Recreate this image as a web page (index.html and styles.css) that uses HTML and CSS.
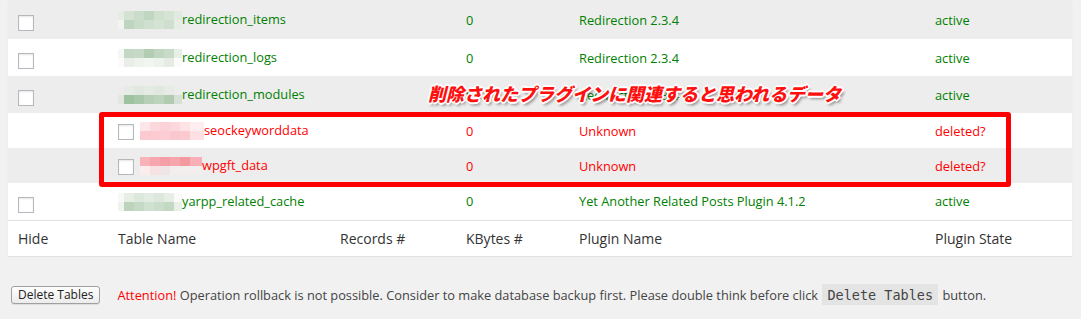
FILE: index.html
```html
<!DOCTYPE html>
<html lang="en">

<head>
    <meta charset="UTF-8">
    <title>Database Cleanup - Tables</title>
    <link rel="stylesheet" href="styles.css">
</head>

<body>
    <div class="wrap">
        <div class="table-box">
            <table class="tables">
                <tbody>
                    <tr class="alt r1">
                        <td class="hide-col"><input type="checkbox" class="chk"></td>
                        <td><span class="mosaic g-a"></span>redirection_items</td>
                        <td></td>
                        <td>0</td>
                        <td>Redirection 2.3.4</td>
                        <td>active</td>
                    </tr>
                    <tr class="r2">
                        <td class="hide-col"><input type="checkbox" class="chk"></td>
                        <td><span class="mosaic g-b"></span>redirection_logs</td>
                        <td></td>
                        <td>0</td>
                        <td>Redirection 2.3.4</td>
                        <td>active</td>
                    </tr>
                    <tr class="alt r3">
                        <td class="hide-col"><input type="checkbox" class="chk"></td>
                        <td><span class="mosaic g-c"></span>redirection_modules</td>
                        <td></td>
                        <td>0</td>
                        <td>Redirection 2.3.4</td>
                        <td>active</td>
                    </tr>
                    <tr class="deleted r4">
                        <td class="hide-col"></td>
                        <td><input type="checkbox" class="chk inline"><span class="mosaic r-a"></span>seockeyworddata</td>
                        <td></td>
                        <td>0</td>
                        <td>Unknown</td>
                        <td>deleted?</td>
                    </tr>
                    <tr class="alt deleted r5">
                        <td class="hide-col"></td>
                        <td><input type="checkbox" class="chk inline"><span class="mosaic r-b"></span>wpgft_data</td>
                        <td></td>
                        <td>0</td>
                        <td>Unknown</td>
                        <td>deleted?</td>
                    </tr>
                    <tr class="r6">
                        <td class="hide-col"><input type="checkbox" class="chk"></td>
                        <td><span class="mosaic g-d"></span>yarpp_related_cache</td>
                        <td></td>
                        <td>0</td>
                        <td>Yet Another Related Posts Plugin 4.1.2</td>
                        <td>active</td>
                    </tr>
                </tbody>
                <tfoot>
                    <tr>
                        <th>Hide</th>
                        <th>Table Name</th>
                        <th>Records #</th>
                        <th>KBytes #</th>
                        <th>Plugin Name</th>
                        <th>Plugin State</th>
                    </tr>
                </tfoot>
            </table>

            <div class="note-box"></div>
            <p class="note-label">削除されたプラグインに関連すると思われるデータ</p>
        </div>

        <div class="actions">
            <button class="btn">Delete Tables</button>
            <p class="warn"><span class="attn">Attention!</span> Operation rollback is not possible. Consider to make database backup first. Please double think before click <code>Delete Tables</code> button.</p>
        </div>
    </div>
</body>

</html>
```

FILE: styles.css
```css
* {
    margin: 0;
    padding: 0;
    box-sizing: border-box;
}

body {
    font-family: 'Open Sans', sans-serif;
    background-color: #f1f1f1;
    color: #444;
    font-size: 13px;
}

.wrap {
    padding: 0 9px 0 8px;
}

.table-box {
    position: relative;
    width: 1064px;
}

.tables {
    width: 1064px;
    border-collapse: collapse;
    table-layout: fixed;
    background-color: #fff;
    box-shadow: 0 1px 1px rgba(0, 0, 0, 0.06);
}

.tables td,
.tables th {
    padding: 0 10px;
    text-align: left;
    vertical-align: middle;
    white-space: nowrap;
    font-weight: normal;
}

.tables td {
    color: #008000;
    font-size: 12.8px;
}

.tables td:nth-child(1),
.tables th:nth-child(1) { width: 100px; }
.tables td:nth-child(2),
.tables th:nth-child(2) { width: 222px; }
.tables td:nth-child(3),
.tables th:nth-child(3) { width: 126px; }
.tables td:nth-child(4),
.tables th:nth-child(4) { width: 113px; }
.tables td:nth-child(5),
.tables th:nth-child(5) { width: 356px; }
.tables td:nth-child(6),
.tables th:nth-child(6) { width: 147px; }

.tables tr.alt {
    background-color: #ededed;
}

.r1 { height: 39px; }
.r2 { height: 37px; }
.r3 { height: 37px; }
.r4 { height: 35px; }
.r5 { height: 35px; }
.r6 { height: 37px; }

.tables tr.deleted td {
    color: #ff0000;
}

.tables tfoot tr {
    height: 36px;
    border-top: 1px solid #e1e1e1;
}

.tables th {
    color: #333;
    font-size: 14px;
}

.chk {
    appearance: none;
    display: block;
    width: 16px;
    height: 16px;
    margin-top: 7px;
    background-color: #fff;
    border: 1px solid #b4b9be;
    box-shadow: inset 0 1px 2px rgba(0, 0, 0, 0.1);
}

.chk.inline {
    display: inline-block;
    margin: 0 6px 0 0;
    vertical-align: middle;
}

.mosaic {
    display: inline-block;
    width: 64px;
    height: 18px;
    vertical-align: middle;
    margin-top: -2px;
}

.g-a {
    background:
        linear-gradient(to right, #e4ece4 0 6px, #d3e2d3 6px 16px, #cadcca 16px 26px, #c1d6c1 26px 36px, #cfe0cf 36px 46px, #d6e4d6 46px 56px, #e1eae1 56px 64px) top / 100% 50% no-repeat,
        linear-gradient(to right, #f1f4f1 0 6px, #bfd5bf 6px 16px, #c9dcc9 16px 26px, #d0e0d0 26px 36px, #d4e3d4 36px 46px, #cfdfcf 46px 56px, #e5ede5 56px 64px) bottom / 100% 50% no-repeat;
}

.g-b {
    background:
        linear-gradient(to right, #f4f7f4 0 6px, #c2d8c2 6px 16px, #c6d9c6 16px 26px, #b3cdb3 26px 36px, #c0d6c0 36px 46px, #c8dac8 46px 56px, #e8efe8 56px 64px) top / 100% 50% no-repeat,
        linear-gradient(to right, #fafbfa 0 6px, #e8efe8 6px 16px, #eef3ee 16px 26px, #f2f6f2 26px 36px, #ecf2ec 36px 46px, #e4ece4 46px 56px, #fafbfa 56px 64px) bottom / 100% 50% no-repeat;
}

.g-c {
    background:
        linear-gradient(to right, #ececec 0 6px, #e6ebe6 6px 16px, #e0e8e0 16px 26px, #e4eae4 26px 36px, #e0e8e0 36px 46px, #e6ebe6 46px 56px, #ececec 56px 64px) top / 100% 50% no-repeat,
        linear-gradient(to right, #e2e7e2 0 6px, #9fc29f 6px 16px, #a9c8a9 16px 26px, #b6cfb6 26px 36px, #bcd3bc 36px 46px, #b0cbb0 46px 56px, #d5e1d5 56px 64px) bottom / 100% 50% no-repeat;
}

.g-d {
    background:
        linear-gradient(to right, #f7f9f7 0 6px, #e6eee6 6px 16px, #dde8dd 16px 26px, #e3ece3 26px 36px, #dde8dd 36px 46px, #e6eee6 46px 56px, #f9faf9 56px 64px) top / 100% 50% no-repeat,
        linear-gradient(to right, #eef3ee 0 6px, #bcd3bc 6px 16px, #c6d9c6 16px 26px, #d1e1d1 26px 36px, #cadcca 36px 46px, #c3d8c3 46px 56px, #e9efe9 56px 64px) bottom / 100% 50% no-repeat;
}

.r-a {
    width: 64px;
    background:
        linear-gradient(to right, #fde6e9 0 10px, #fbd8dc 10px 20px, #fbd2d7 20px 30px, #fcd8dd 30px 40px, #fde2e6 40px 50px, #feeef0 50px 64px) top / 100% 50% no-repeat,
        linear-gradient(to right, #fbc9cf 0 10px, #fbcbd1 10px 20px, #fccdd3 20px 30px, #fbc7ce 30px 40px, #fbcad0 40px 50px, #fde0e4 50px 64px) bottom / 100% 50% no-repeat;
}

.r-b {
    width: 62px;
    background:
        linear-gradient(to right, #f9b3b8 0 10px, #f7a6ad 10px 20px, #f59ea5 20px 30px, #f7a5ac 30px 40px, #f39aa1 40px 50px, #f8b0b6 50px 62px) top / 100% 50% no-repeat,
        linear-gradient(to right, #fbeced 0 10px, #f6e1e3 10px 20px, #efe5e6 20px 30px, #f3eeee 30px 62px) bottom / 100% 50% no-repeat;
}

.note-box {
    position: absolute;
    left: 91px;
    top: 112px;
    width: 912px;
    height: 75px;
    border: 5px solid #ff0000;
    border-radius: 3px;
}

.note-label {
    position: absolute;
    left: 420px;
    top: 80px;
    font-family: 'Noto Sans CJK JP', sans-serif;
    font-size: 18px;
    font-weight: 900;
    font-style: italic;
    line-height: 26px;
    color: #ff1010;
    white-space: nowrap;
    text-shadow:
        -2px 0 0 #fff, 2px 0 0 #fff, 0 -2px 0 #fff, 0 2px 0 #fff,
        -1px -1px 0 #fff, 1px -1px 0 #fff, -1px 1px 0 #fff, 1px 1px 0 #fff,
        2px 3px 3px rgba(0, 0, 0, 0.45);
}

.actions {
    display: flex;
    align-items: center;
    margin-top: 27px;
    margin-left: 3px;
    height: 24px;
}

.btn {
    font-family: 'Open Sans', sans-serif;
    font-size: 12px;
    color: #222;
    padding: 0 6px;
    height: 18px;
    line-height: 16px;
    border: 1px solid #a0a0a0;
    border-radius: 3px;
    background: linear-gradient(#fefefe, #ececec);
    box-shadow: 0 1px 0 rgba(0, 0, 0, 0.08);
    margin-right: 17px;
}

.warn {
    font-size: 12.8px;
    color: #444;
    white-space: nowrap;
}

.attn {
    color: #ff0000;
}

.warn code {
    font-family: 'DejaVu Sans Mono', monospace;
    font-size: 13.5px;
    background-color: #e4e4e4;
    padding: 3px 5px 2px;
    margin: 0 1px;
}
```
